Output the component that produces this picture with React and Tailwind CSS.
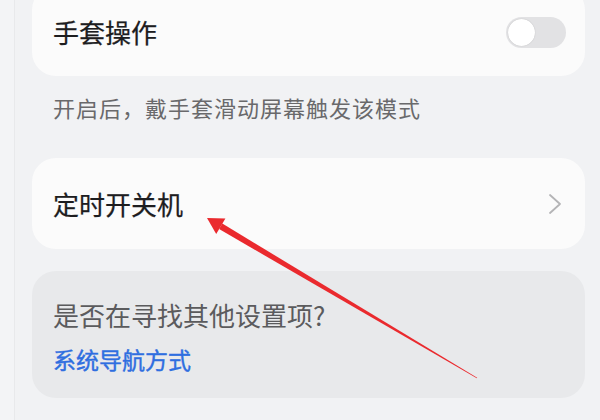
const font = { fontFamily: '"Noto Sans CJK SC", "Noto Sans", sans-serif' }

function Toggle() {
  return (
    <div className="w-[60px] h-[31px] rounded-full bg-[#e2e2e4] p-[2px] flex items-center">
      <div className="w-[27px] h-[27px] rounded-full bg-white shadow-[0_0_1px_rgba(0,0,0,0.25)]" />
    </div>
  )
}

function Chevron() {
  return (
    <svg width="14" height="22" viewBox="0 0 14 22" fill="none">
      <polyline points="2,2 12,11 2,20" stroke="#b4b4b6" strokeWidth="1.8" strokeLinecap="round" strokeLinejoin="round" />
    </svg>
  )
}

function Arrow() {
  return (
    <svg className="absolute inset-0 pointer-events-none" width="600" height="420" viewBox="0 0 600 420">
      {/* tapered shaft */}
      <polygon points="222.3,223.6 219.1,229.1 476.8,378.3 477.2,377.7" fill="#ea2a2e" />
      {/* head */}
      <polygon points="207,218 225.4,218.5 216.2,233.9" fill="#ea2a2e" />
    </svg>
  )
}

export default function App() {
  return (
    <div className="relative w-[600px] h-[420px] overflow-hidden bg-[#f1f2f4]" style={font}>
      {/* faint left edge strip */}
      <div className="absolute left-0 top-0 bottom-0 w-[15px] bg-[#f3f4f6] border-r border-[#e8e9eb]" />

      <div className="pl-[32px] pr-[15px] flex flex-col">
        {/* 手套操作 */}
        <div className="-mt-[14px] h-[90px] rounded-[24px] bg-[#fbfbfb] pl-[21px] pr-[19px] pt-[2px] flex items-center justify-between">
          <span className="text-[26px] text-[#1d1d1f] leading-none [-webkit-text-stroke:0.25px_#1d1d1f]">手套操作</span>
          <Toggle />
        </div>

        <p className="pl-[21px] mt-[20px] text-[22px] leading-none text-[#69696b] tracking-[1px]">
          开启后，戴手套滑动屏幕触发该模式
        </p>

        {/* 定时开关机 */}
        <div className="mt-[40px] h-[91px] rounded-[24px] bg-[#fbfbfb] pl-[21px] pr-[23px] flex items-center justify-between">
          <span className="text-[26px] text-[#1d1d1f] leading-none [-webkit-text-stroke:0.25px_#1d1d1f]">定时开关机</span>
          <Chevron />
        </div>

        {/* 是否在寻找其他设置项? */}
        <div className="mt-[22px] h-[127px] rounded-[24px] bg-[#e8e9eb] pl-[21px] pr-[19px] pt-[31px] flex flex-col">
          <span className="text-[26px] text-[#5b5b5d] leading-none">是否在寻找其他设置项?</span>
          <span className="mt-[20px] text-[23px] text-[#2f6ee0] leading-none [-webkit-text-stroke:0.4px_#2f6ee0]">系统导航方式</span>
        </div>
      </div>

      <Arrow />
    </div>
  )
}
